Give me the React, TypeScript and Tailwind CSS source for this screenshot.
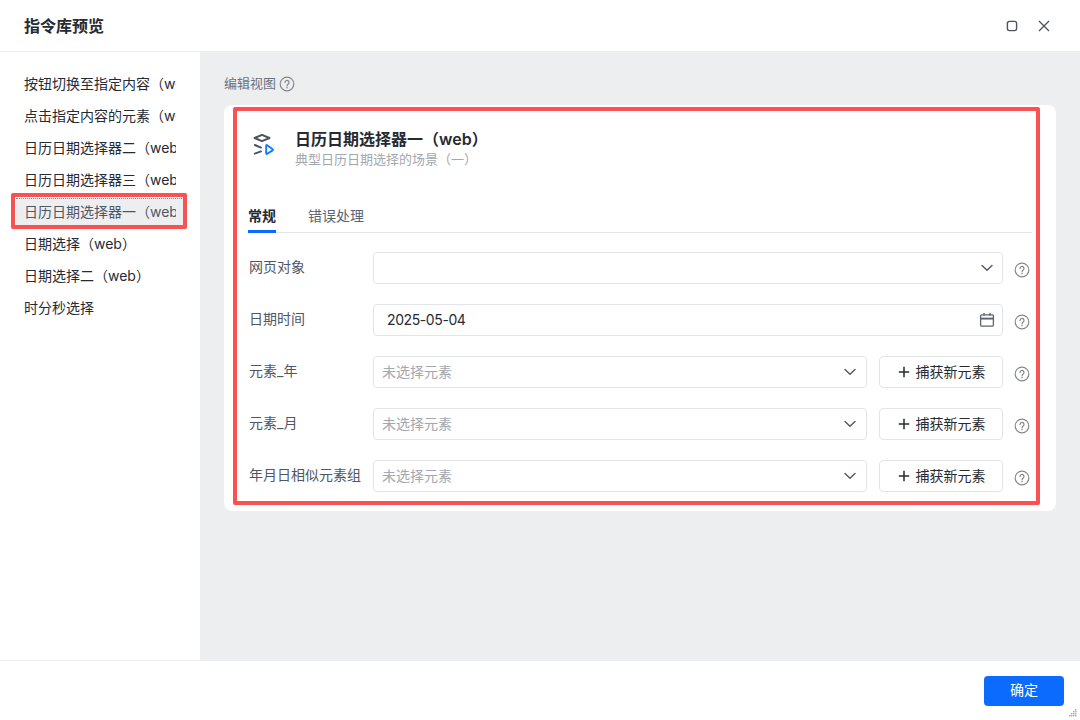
import React from "react";

const font = { fontFamily: 'Inter, "Noto Sans CJK SC", sans-serif' };

function Help({ className = "" }: { className?: string }) {
  return (
    <svg width="16" height="16" viewBox="0 0 16 16" fill="none" className={className}>
      <circle cx="8" cy="8" r="6.8" stroke="#85888f" strokeWidth="1.2" />
      <path d="M6 6.4a2 2 0 1 1 3.2 1.6c-.8.6-1.2 1-1.2 1.9" stroke="#85888f" strokeWidth="1.2" strokeLinecap="round" />
      <circle cx="8" cy="11.7" r=".8" fill="#85888f" />
    </svg>
  );
}

function Chevron() {
  return (
    <svg width="12" height="8" viewBox="0 0 12 8" fill="none">
      <path d="M1 1.5 6 6.2l5-4.7" stroke="#4f5664" strokeWidth="1.4" strokeLinecap="round" strokeLinejoin="round" />
    </svg>
  );
}

function Calendar() {
  return (
    <svg width="16" height="16" viewBox="0 0 16 16" fill="none">
      <rect x="1.6" y="2.9" width="12.8" height="11.2" rx="1" stroke="#5b6270" strokeWidth="1.3" />
      <path d="M2 6.6h12" stroke="#5b6270" strokeWidth="1.9" />
      <path d="M5 1v2.8M11 1v2.8" stroke="#5b6270" strokeWidth="1.3" />
    </svg>
  );
}

function LibIcon() {
  return (
    <svg width="24" height="24" viewBox="0 0 24 24" fill="none">
      <path d="M12 1.8 19.4 5 12 8.2 4.6 5z" stroke="#4b5362" strokeWidth="2" strokeLinejoin="round" />
      <path d="M4.8 12 11 14.6" stroke="#4b5362" strokeWidth="1.9" strokeLinecap="round" />
      <path d="M11 18.4 4.8 20.6" stroke="#4b5362" strokeWidth="1.9" strokeLinecap="round" />
      <path d="M16.2 12.8v7.4c0 .6.5.9 1 .6l5.4-3.4a.7.7 0 0 0 0-1.2l-5.4-4c-.5-.3-1 0-1 .6z" stroke="#1677ff" strokeWidth="1.9" strokeLinejoin="round" />
    </svg>
  );
}

const items = [
  "按钮切换至指定内容（web）",
  "点击指定内容的元素（web）",
  "日历日期选择器二（web）",
  "日历日期选择器三（web）",
  "日历日期选择器一（web）",
  "日期选择（web）",
  "日期选择二（web）",
  "时分秒选择",
];

function Row({ label, children }: { label: string; children: React.ReactNode }) {
  return (
    <div className="flex items-center h-8">
      <div className="w-[125px] pl-px text-sm text-[#4f5664] whitespace-nowrap pb-[2px]">{label}</div>
      <div className="flex-1 flex gap-3 min-w-0">{children}</div>
      <div className="w-[29px] flex justify-end pr-[2px] pt-[3px]">
        <Help />
      </div>
    </div>
  );
}

function ElementRow({ label }: { label: string }) {
  return (
    <Row label={label}>
      <div className="flex-1 h-8 rounded border border-[#e3e4e8] flex items-center justify-between pl-2 pr-[10px] text-sm text-[#a3a7ae]">
        <span>未选择元素</span>
        <Chevron />
      </div>
      <div className="w-[124px] h-8 rounded border border-[#e3e4e8] flex items-center justify-center gap-[6px] pl-px text-sm text-[#262a32]">
        <svg width="12" height="12" viewBox="0 0 12 12" fill="none">
          <path d="M6 .8v10.4M.8 6h10.4" stroke="#262a32" strokeWidth="1.5" />
        </svg>
        <span>捕获新元素</span>
      </div>
    </Row>
  );
}

export default function App() {
  return (
    <div style={font} className="w-[1080px] h-[720px] bg-white flex flex-col overflow-hidden relative">
      <header className="h-[52px] shrink-0 flex items-center justify-between pl-6 pr-[29px] border-b border-[#eceef0]">
        <h1 className="text-base font-semibold text-[#262a32]">指令库预览</h1>
        <div className="flex items-center gap-[18px]">
          <svg width="14" height="14" viewBox="0 0 14 14" fill="none">
            <rect x="2.4" y="2.4" width="9.2" height="9.2" rx="2" stroke="#4b5362" strokeWidth="1.4" />
          </svg>
          <svg width="14" height="14" viewBox="0 0 14 14" fill="none">
            <path d="M2 2l10 10M12 2 2 12" stroke="#4b5362" strokeWidth="1.3" />
          </svg>
        </div>
      </header>

      <div className="flex-1 flex min-h-0">
        <aside className="w-[200px] shrink-0 px-4 pt-[18px] flex flex-col gap-1">
          {items.map((t, i) => (
            <div
              key={t}
              className={`h-7 px-2 flex items-center text-sm ${i === 4 ? "bg-[#edeef0] text-[#4f5664] border-t border-dotted border-[#8b8e94] pb-px" : "text-[#262a32]"}`}
            >
              <span className="block w-full overflow-hidden whitespace-nowrap">{t}</span>
            </div>
          ))}
        </aside>

        <main className="flex-1 bg-[#edeef0] pl-6 pr-6 pt-[22px]">
          <div className="flex items-center gap-[3px] text-[13px] text-[#6b7280] h-5">
            <span>编辑视图</span>
            <Help />
          </div>
          <div className="mt-[11px] bg-white rounded-lg h-[406px] pl-6 pr-6 pt-[22px]">
            <div className="flex items-start gap-[21px] pl-[2px]">
              <div className="pt-[6px]">
                <LibIcon />
              </div>
              <div className="flex flex-col">
                <span className="text-base font-semibold text-[#262a32] leading-[24px]">日历日期选择器一（web）</span>
                <span className="text-[13px] text-[#a3a7ae] leading-4">典型日历日期选择的场景（一）</span>
              </div>
            </div>
            <div className="mt-[33px] flex gap-8 border-b border-[#e3e4e8] h-[33px] text-sm">
              <div className="h-[33px] border-b-[3px] border-[#0b6bff] font-semibold text-[#262a32] leading-[32px]">常规</div>
              <div className="text-[#5b6270] leading-[32px]">错误处理</div>
            </div>
            <div className="mt-[19px] flex flex-col gap-5">
              <Row label="网页对象">
                <div className="flex-1 h-8 rounded border border-[#e3e4e8] flex items-center justify-end pr-[9px]">
                  <Chevron />
                </div>
              </Row>
              <Row label="日期时间">
                <div className="flex-1 h-8 rounded border border-[#e3e4e8] flex items-center justify-between pl-[13px] pr-[7px] text-sm text-[#262a32]">
                  <span className="tracking-[-0.4px]">2025-05-04</span>
                  <Calendar />
                </div>
              </Row>
              <ElementRow label="元素_年" />
              <ElementRow label="元素_月" />
              <ElementRow label="年月日相似元素组" />
            </div>
          </div>
        </main>
      </div>

      <footer className="h-[60px] shrink-0 border-t border-[#eceef0] flex items-center justify-end pr-4">
        <button className="w-20 h-[30px] rounded bg-[#0b6bff] text-white text-sm pb-px">确定</button>
      </footer>

      <svg width="8" height="8" viewBox="0 0 8 8" className="absolute right-[3px] bottom-[3px]" fill="#a3a7ae">
        <rect x="6" y="0" width="1.4" height="1.4" />
        <rect x="4" y="2" width="1.4" height="1.4" />
        <rect x="6" y="2" width="1.4" height="1.4" />
        <rect x="2" y="4" width="1.4" height="1.4" />
        <rect x="4" y="4" width="1.4" height="1.4" />
        <rect x="6" y="4" width="1.4" height="1.4" />
        <rect x="0" y="6" width="1.4" height="1.4" />
        <rect x="2" y="6" width="1.4" height="1.4" />
        <rect x="4" y="6" width="1.4" height="1.4" />
        <rect x="6" y="6" width="1.4" height="1.4" />
      </svg>

      <div className="absolute left-[11px] top-[193px] w-[176px] h-9 border-4 border-[#fa5252] rounded-[2px] pointer-events-none" />
      <div className="absolute left-[233px] top-[107px] w-[807px] h-[398px] border-4 border-[#fa5252] rounded-[2px] pointer-events-none" />
    </div>
  );
}
